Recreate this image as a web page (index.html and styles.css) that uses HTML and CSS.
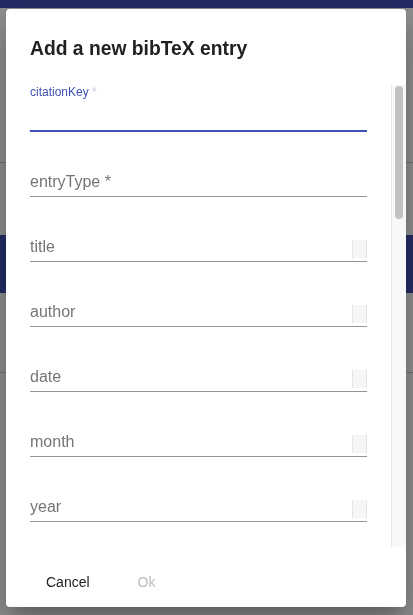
FILE: index.html
```html
<!DOCTYPE html>
<html>
<head>
<meta charset="utf-8">
<link rel="stylesheet" href="styles.css">
</head>
<body>
<div class="page">
  <div class="appbar"></div>
  <div class="section first"></div>
  <div class="section second"></div>
  <div class="band"></div>
  <div class="section third"></div>
  <div class="section fourth"></div>
</div>

<div class="backdrop">
  <div class="dialog">
    <h2 class="dialog-title">Add a new bibTeX entry</h2>
    <div class="dialog-content">
      <div class="scroll">
        <div class="field focused">
          <label class="field-label">citationKey<span class="req"> *</span></label>
          <div class="input"></div>
        </div>
        <div class="field"><div class="input"><span class="ph">entryType *</span></div></div>
        <div class="field"><div class="input"><span class="ph">title</span><span class="spin"></span></div></div>
        <div class="field"><div class="input"><span class="ph">author</span><span class="spin"></span></div></div>
        <div class="field"><div class="input"><span class="ph">date</span><span class="spin"></span></div></div>
        <div class="field"><div class="input"><span class="ph">month</span><span class="spin"></span></div></div>
        <div class="field"><div class="input"><span class="ph">year</span><span class="spin"></span></div></div>
      </div>
      <div class="scrollbar"><div class="thumb"></div></div>
    </div>
    <div class="dialog-actions">
      <button class="btn">Cancel</button>
      <button class="btn disabled">Ok</button>
    </div>
  </div>
</div>
</body>
</html>
```

FILE: styles.css
```css
* { box-sizing: border-box; }
html, body { margin: 0; padding: 0; height: 100%; }
body {
  font-family: "Liberation Sans", Arial, sans-serif;
  background: #ffffff;
  overflow: hidden;
}
.page { display: flex; flex-direction: column; }
.appbar { height: 8px; background: #3f51b5; }
.section.first { height: 155px; border-bottom: 1px solid #c9c9c9; }
.section.second { height: 72px; }
.band { height: 58px; background: #3f51b5; }
.section.third { height: 80px; border-bottom: 1px solid #c9c9c9; }
.section.fourth { height: 240px; }

.backdrop {
  position: fixed;
  inset: 0;
  background: rgba(0, 0, 0, 0.44);
  display: flex;
  align-items: flex-start;
  justify-content: flex-start;
}
.dialog {
  margin: 9px 0 0 6px;
  width: 400px;
  height: 598px;
  background: #fff;
  border-radius: 4px;
  display: flex;
  flex-direction: column;
  overflow: hidden;
  box-shadow: 0 11px 15px -7px rgba(0,0,0,.2), 0 24px 38px 3px rgba(0,0,0,.14), 0 9px 46px 8px rgba(0,0,0,.12);
}
.dialog-title {
  margin: 0;
  padding: 24px 24px 20px;
  font-size: 19.3px;
  line-height: 32px;
  font-weight: 700;
  color: #212121;
}
.dialog-content {
  flex: 1;
  min-height: 0;
  display: flex;
}
.scroll {
  flex: 1;
  overflow: hidden;
  padding: 0 24px;
}
.scrollbar {
  width: 15px;
  background: #f8f8f8;
  border-left: 1px solid #e6e6e6;
  padding: 1px 3px 0 3px;
}
.thumb {
  height: 133px;
  background: #c1c1c1;
  border-radius: 4px;
}

.field { padding-top: 33px; }
.field.focused { padding-top: 0; }
.field-label {
  display: block;
  height: 15px;
  font-size: 12px;
  line-height: 15px;
  color: #3f51b5;
}
.req { color: #c5c8dc; }
.input {
  height: 32px;
  padding: 7px 0 5px;
  border-bottom: 1px solid #949494;
  display: flex;
  align-items: center;
}
.field.focused .input { border-bottom: 2px solid #3f51b5; }
.ph {
  flex: 1;
  font-size: 16px;
  line-height: 19px;
  color: #757575;
}
.spin {
  align-self: flex-end;
  width: 15px;
  height: 18px;
  margin-bottom: -2px;
  background: #f6f6f6;
  border-left: 1px solid #e4e4e4;
  border-right: 1px solid #e4e4e4;
}

.dialog-actions {
  padding: 17px 24px 7px;
  display: flex;
  gap: 16px;
}
.btn {
  height: 36px;
  padding: 0 16px;
  border: none;
  background: transparent;
  font-family: "Liberation Sans", Arial, sans-serif;
  font-size: 14px;
  font-weight: 500;
  color: #212121;
  cursor: pointer;
}
.btn.disabled { color: #bdbdbd; }
```
